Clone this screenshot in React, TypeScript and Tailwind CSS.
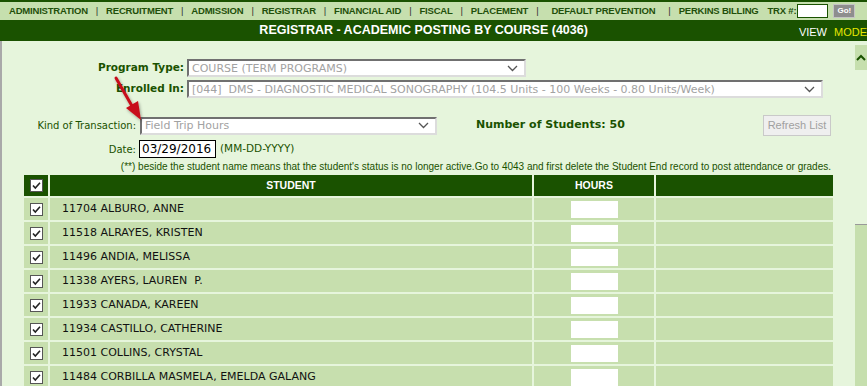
import React from "react";

const DARK = "bg-[#1a5200]";

const navItems = [
  "ADMINISTRATION",
  "RECRUITMENT",
  "ADMISSION",
  "REGISTRAR",
  "FINANCIAL AID",
  "FISCAL",
  "PLACEMENT",
  "DEFAULT PREVENTION",
];

const students = [
  "11704 ALBURO, ANNE",
  "11518 ALRAYES, KRISTEN",
  "11496 ANDIA, MELISSA",
  "11338 AYERS, LAUREN  P.",
  "11933 CANADA, KAREEN",
  "11934 CASTILLO, CATHERINE",
  "11501 COLLINS, CRYSTAL",
  "11484 CORBILLA MASMELA, EMELDA GALANG",
];

const Check = () => (
  <svg width="13" height="13" viewBox="0 0 13 13" className="block">
    <rect x="0.5" y="0.5" width="12" height="12" fill="#fff" stroke="#555" />
    <path d="M3 6.5 L5.3 9 L10 3.8" fill="none" stroke="#222" strokeWidth="1.6" />
  </svg>
);

const Chevron = () => (
  <svg width="11" height="7" viewBox="0 0 11 7" className="block">
    <path d="M1 1 L5.5 5.5 L10 1" fill="none" stroke="#555" strokeWidth="1.3" />
  </svg>
);

const FakeSelect = ({ text, width }: { text: string; width: string }) => (
  <div
    className={`${width} h-[18px] bg-white flex items-center justify-between pl-[3px] pr-[6px] border-t-2 border-l-2 border-r-2 border-b-2 border-t-[#707070] border-l-[#707070] border-r-[#dcdcdc] border-b-[#dcdcdc]`}
  >
    <span className="text-[11px] text-[#a2a2a2] whitespace-pre leading-none">{text}</span>
    <Chevron />
  </div>
);

export default function App() {
  return (
    <div className="w-[867px] h-[386px] overflow-hidden relative bg-[#e6f5dc] font-['DejaVu_Sans',sans-serif]">
      <div className={`h-[2px] ${DARK}`} />

      {/* top nav */}
      <nav className="h-[18px] bg-[#c6dfae] flex items-center pl-[9px] text-[#1f4f0a] font-['Liberation_Sans',Arial,sans-serif] font-bold text-[9.5px] tracking-[-0.2px] whitespace-nowrap">
        {navItems.map((item, i) => (
          <React.Fragment key={item}>
            {i > 0 && <span className="mx-[8px] font-normal text-[#333]">|</span>}
            <span className={item === "DEFAULT PREVENTION" ? "px-[5px]" : ""}>{item}</span>
          </React.Fragment>
        ))}
        <span className="mx-[8px] font-normal text-[#333]">|</span>
        <span>PERKINS BILLING</span>
        <span className="ml-[9px]">TRX #:</span>
        <span className="ml-[1px] w-[31px] h-[14px] bg-white border border-[#1a5200]" />
        <span className="ml-[5px] w-[22px] h-[14px] bg-[#8e8e8e] border border-[#c4c4c4] text-white text-[8px] tracking-normal flex items-center justify-center">
          Go!
        </span>
      </nav>

      {/* title bar */}
      <div className={`h-[21px] ${DARK} grid grid-cols-[1fr_auto_1fr] items-center overflow-hidden whitespace-nowrap font-['Liberation_Sans',Arial,sans-serif]`}>
        <div />
        <div className="text-white font-bold text-[12.5px]">REGISTRAR - ACADEMIC POSTING BY COURSE (4036)</div>
        <div className="pl-[211px] text-[11px] mt-[3px]">
          <span className="text-white">VIEW</span>
          <span className="text-[#e6e600] ml-[7px]">MODE</span>
        </div>
      </div>

      <div className="flex h-[345px]">
        <div className="w-[2px] bg-[#a9a9a9]" />

        <main className="w-[853px] pt-[18px] flex flex-col">
          <div className="flex items-center">
            <div className="w-[185px] pr-[3px] text-right text-[10.5px] font-bold text-[#1a5200]">Program Type:</div>
            <FakeSelect text="COURSE (TERM PROGRAMS)" width="w-[339px]" />
          </div>
          <div className="flex items-center mt-[3px]">
            <div className="w-[185px] pr-[3px] text-right text-[10.5px] font-bold text-[#1a5200]">Enrolled In:</div>
            <FakeSelect
              text="[044]  DMS - DIAGNOSTIC MEDICAL SONOGRAPHY (104.5 Units - 100 Weeks - 0.80 Units/Week)"
              width="w-[636px]"
            />
          </div>

          <div className="mt-[8px] h-[2px] bg-[#cfd6ca]" />

          <div className="flex items-center mt-[9px] h-[21px]">
            <div className="w-[138px] pr-[4px] text-right text-[10px] text-[#1a5200]">Kind of Transaction:</div>
            <FakeSelect text="Field Trip Hours" width="w-[297px]" />
            <div className="ml-[39px] text-[11px] font-bold text-[#1a5200]">Number of Students: 50</div>
            <button className="ml-auto mr-[24px] w-[68px] h-[21px] bg-[#efefef] border border-[#c9c9c9] text-[#a0a0a0] text-[11px] font-['Liberation_Sans',Arial,sans-serif]">
              Refresh List
            </button>
          </div>

          <div className="flex items-center mt-[4px]">
            <div className="w-[137px] pr-[3px] text-right text-[10px] text-[#1a5200]">Date:</div>
            <div className="w-[77px] h-[18px] bg-white border border-black flex items-center pl-[2px] text-[12px] text-black leading-none">
              03/29/2016
            </div>
            <div className="ml-[4px] text-[10.5px] text-[#1a5200]">(MM-DD-YYYY)</div>
          </div>

          <div className="mt-[2px] pr-[24px] text-right text-[10px] text-[#1a5200] font-['Liberation_Sans',Arial,sans-serif] whitespace-nowrap leading-[14px]">
            (**) beside the student name means that the student's status is no longer active.Go to 4043 and first delete the Student End record to post attendance or grades.
          </div>

          {/* student table */}
          <div className="ml-[22px] mt-[1px] w-[809px] grid grid-cols-[24px_482px_120px_177px] gap-x-[2px] gap-y-[2px]">
            <div className={`${DARK} h-[21px] flex items-center justify-center`}>
              <Check />
            </div>
            <div className={`${DARK} h-[21px] flex items-center justify-center text-white font-bold text-[10.5px] font-['Liberation_Sans',Arial,sans-serif]`}>
              STUDENT
            </div>
            <div className={`${DARK} h-[21px] flex items-center justify-center text-white font-bold text-[10.5px] font-['Liberation_Sans',Arial,sans-serif]`}>
              HOURS
            </div>
            <div className={`${DARK} h-[21px]`} />

            {students.map((s) => (
              <React.Fragment key={s}>
                <div className="bg-[#c7dfae] h-[22px] flex items-center justify-center">
                  <Check />
                </div>
                <div className="bg-[#c7dfae] h-[22px] flex items-center pl-[12px] text-[11px] text-[#111] whitespace-pre">
                  {s}
                </div>
                <div className="bg-[#c7dfae] h-[22px] flex items-center justify-center">
                  <div className="w-[47px] h-[17px] bg-white" />
                </div>
                <div className="bg-[#c7dfae] h-[22px]" />
              </React.Fragment>
            ))}
          </div>
        </main>

        {/* frame scrollbar */}
        <aside className="w-[12px] flex flex-col">
          <div className="mt-[4px] h-[25px] bg-[#c6dfae] flex items-center justify-center">
            <svg width="10" height="7" viewBox="0 0 10 7">
              <path d="M1 6 L5 2 L9 6" fill="none" stroke="#1a5200" strokeWidth="2" />
            </svg>
          </div>
          <div className="mt-[154px] flex-1 bg-[#c6dfae] border-t border-[#999]" />
        </aside>
      </div>

      {/* red annotation arrow */}
      <svg className="absolute left-0 top-0 pointer-events-none" width="867" height="386">
        <defs>
          <filter id="sh" x="-50%" y="-50%" width="200%" height="200%">
            <feDropShadow dx="1" dy="1.5" stdDeviation="1.5" floodColor="#000" floodOpacity="0.35" />
          </filter>
        </defs>
        <g filter="url(#sh)">
          <line x1="116" y1="78" x2="132" y2="106" stroke="#c8111a" strokeWidth="3" strokeLinecap="round" />
          <polygon points="141,120 126,108 138,101" fill="#c8111a" />
        </g>
      </svg>
    </div>
  );
}
